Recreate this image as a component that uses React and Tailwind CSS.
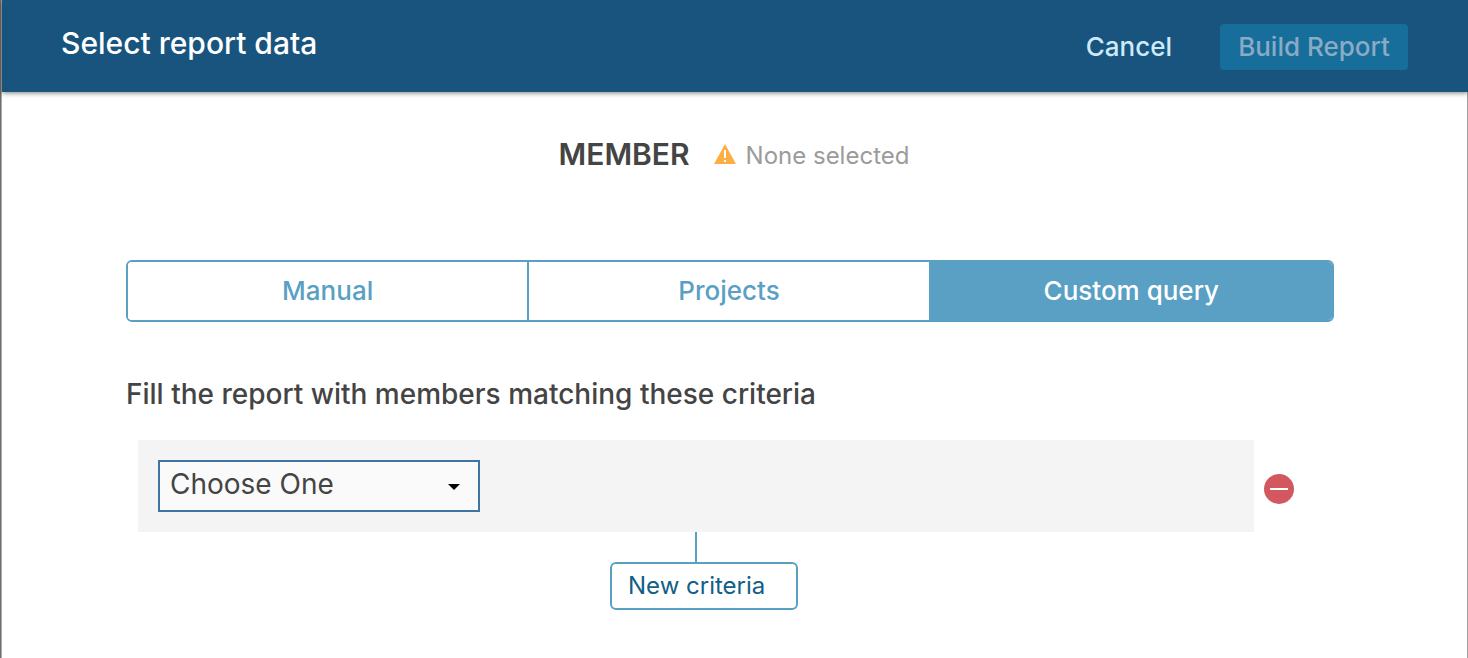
import { useState } from "react";

const TABS = ["Manual", "Projects", "Custom query"];

function WarningIcon() {
  return (
    <svg className="h-5 w-[22px]" viewBox="0 0 22 20" aria-hidden="true">
      <path d="M11 0 22 20H0Z" fill="#fdae42" />
      <path d="M10 6h2v8h-2zM10 16h2v2h-2z" fill="#fff" />
    </svg>
  );
}

function Header() {
  return (
    <header className="relative flex h-[92px] items-center justify-between bg-[#18547e] pt-[2px] pr-[60px] pl-[59px] shadow-[0_1px_5px_rgba(0,0,0,0.5)]">
      <h1 className="pb-2 text-[30px] leading-9 font-medium text-white">Select report data</h1>
      <div className="flex items-center gap-12">
        <button type="button" className="text-[26px] leading-8 font-medium text-[#cdeaf8]">
          Cancel
        </button>
        <button
          type="button"
          disabled
          className="h-[46px] w-[188px] rounded-[4px] bg-[#176e9b] text-[26px] leading-8 font-medium whitespace-nowrap text-[#8aabc4]"
        >
          Build Report
        </button>
      </div>
    </header>
  );
}

function Tabs({ active, onSelect }) {
  return (
    <div
      role="tablist"
      className="grid h-[62px] grid-cols-3 divide-x-2 divide-[#59a0c4] overflow-hidden rounded-md border-2 border-[#59a0c4]"
    >
      {TABS.map((tab) => (
        <button
          key={tab}
          type="button"
          role="tab"
          aria-selected={tab === active}
          onClick={() => onSelect(tab)}
          className={
            tab === active
              ? "bg-[#59a0c4] text-[26px] leading-8 font-medium text-white"
              : "bg-white text-[26px] leading-8 font-medium text-[#59a0c4]"
          }
        >
          {tab}
        </button>
      ))}
    </div>
  );
}

export default function App() {
  const [active, setActive] = useState("Custom query");

  return (
    <div className="min-h-screen border-l border-[#6e6e6e] bg-white font-['Inter',sans-serif] text-[#444]">
      <div className="flex min-h-screen flex-col border-l border-[#a9a9a9]">
        <Header />
        <main className="grow border-r border-[#a0a0a0] pt-[42px] pr-[133px] pb-10 pl-[124px]">
          <div className="flex items-center justify-center pl-2">
            <h2 className="text-[30px] leading-9 font-semibold">MEMBER</h2>
            <p className="flex items-center gap-[10px] pt-1 pl-6 text-2xl leading-9 text-[#9b9b9b]">
              <span className="pb-1">
                <WarningIcon />
              </span>
              None selected
            </p>
          </div>

          <div className="pt-[86px]">
            <Tabs active={active} onSelect={setActive} />
          </div>

          <h3 className="pt-[54px] text-[28px] leading-9 font-medium">
            Fill the report with members matching these criteria
          </h3>

          <div className="flex items-center gap-[10px] pt-7 pr-10 pl-3">
            <div className="grow bg-[#f4f4f4] p-5">
              <div className="relative w-[322px]">
                <select
                  aria-label="Criteria"
                  className="h-[52px] w-full appearance-none border-2 border-[#3f74a3] bg-[#fafafa] pb-1 pl-[10px] text-[28px] leading-9 text-[#444] outline-none"
                >
                  <option>Choose One</option>
                </select>
                <svg
                  className="pointer-events-none absolute top-6 right-5 h-[6px] w-3"
                  viewBox="0 0 12 6"
                  aria-hidden="true"
                >
                  <path d="M0 0H12L6 6Z" fill="#000" />
                </svg>
              </div>
            </div>
            <button type="button" aria-label="Remove criteria" className="mt-[6px] rounded-full">
              <svg className="size-[30px]" viewBox="0 0 30 30" aria-hidden="true">
                <circle cx="15" cy="15" r="15" fill="#d2575e" />
                <path d="M6 14h18v2H6z" fill="#fff" />
              </svg>
            </button>
          </div>

          <div className="flex flex-col items-center pr-20 pl-3">
            <div className="h-[30px] w-[2px] bg-[#59a0c4]" />
            <button
              type="button"
              className="ml-4 h-12 w-[188px] rounded-md border-2 border-[#59a0c4] pl-4 text-left text-2xl leading-8 whitespace-nowrap text-[#125e87]"
            >
              New criteria
            </button>
          </div>
        </main>
      </div>
    </div>
  );
}
